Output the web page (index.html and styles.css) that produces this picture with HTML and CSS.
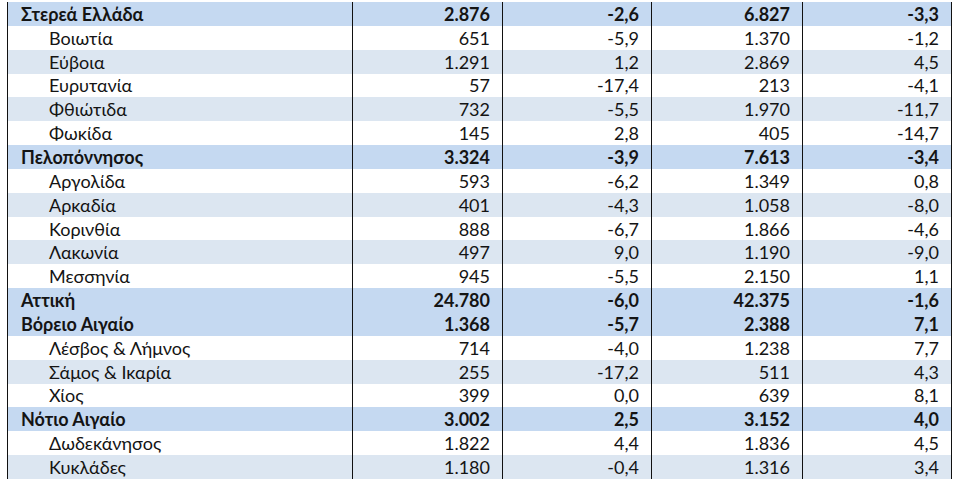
FILE: index.html
```html
<!DOCTYPE html>
<html lang="el">
<head>
<meta charset="utf-8">
<link rel="stylesheet" href="styles.css">
</head>
<body>
<table class="stats">
<colgroup><col class="c-name"><col class="c-num"><col class="c-num2"><col class="c-num3"><col class="c-num4"></colgroup>
<tbody>
<tr class="region"><td class="name">Στερεά Ελλάδα</td><td>2.876</td><td>-2,6</td><td>6.827</td><td>-3,3</td></tr>
<tr class="plain"><td class="name sub">Βοιωτία</td><td>651</td><td>-5,9</td><td>1.370</td><td>-1,2</td></tr>
<tr class="alt"><td class="name sub">Εύβοια</td><td>1.291</td><td>1,2</td><td>2.869</td><td>4,5</td></tr>
<tr class="plain"><td class="name sub">Ευρυτανία</td><td>57</td><td>-17,4</td><td>213</td><td>-4,1</td></tr>
<tr class="alt"><td class="name sub">Φθιώτιδα</td><td>732</td><td>-5,5</td><td>1.970</td><td>-11,7</td></tr>
<tr class="plain"><td class="name sub">Φωκίδα</td><td>145</td><td>2,8</td><td>405</td><td>-14,7</td></tr>
<tr class="region"><td class="name">Πελοπόννησος</td><td>3.324</td><td>-3,9</td><td>7.613</td><td>-3,4</td></tr>
<tr class="plain"><td class="name sub">Αργολίδα</td><td>593</td><td>-6,2</td><td>1.349</td><td>0,8</td></tr>
<tr class="alt"><td class="name sub">Αρκαδία</td><td>401</td><td>-4,3</td><td>1.058</td><td>-8,0</td></tr>
<tr class="plain"><td class="name sub">Κορινθία</td><td>888</td><td>-6,7</td><td>1.866</td><td>-4,6</td></tr>
<tr class="alt"><td class="name sub">Λακωνία</td><td>497</td><td>9,0</td><td>1.190</td><td>-9,0</td></tr>
<tr class="plain"><td class="name sub">Μεσσηνία</td><td>945</td><td>-5,5</td><td>2.150</td><td>1,1</td></tr>
<tr class="region"><td class="name">Αττική</td><td>24.780</td><td>-6,0</td><td>42.375</td><td>-1,6</td></tr>
<tr class="region"><td class="name">Βόρειο Αιγαίο</td><td>1.368</td><td>-5,7</td><td>2.388</td><td>7,1</td></tr>
<tr class="plain"><td class="name sub">Λέσβος &amp; Λήμνος</td><td>714</td><td>-4,0</td><td>1.238</td><td>7,7</td></tr>
<tr class="alt"><td class="name sub">Σάμος &amp; Ικαρία</td><td>255</td><td>-17,2</td><td>511</td><td>4,3</td></tr>
<tr class="plain"><td class="name sub">Χίος</td><td>399</td><td>0,0</td><td>639</td><td>8,1</td></tr>
<tr class="region"><td class="name">Νότιο Αιγαίο</td><td>3.002</td><td>2,5</td><td>3.152</td><td>4,0</td></tr>
<tr class="plain"><td class="name sub">Δωδεκάνησος</td><td>1.822</td><td>4,4</td><td>1.836</td><td>4,5</td></tr>
<tr class="alt"><td class="name sub">Κυκλάδες</td><td>1.180</td><td>-0,4</td><td>1.316</td><td>3,4</td></tr>
</tbody>
</table>
</body>
</html>
```
FILE: styles.css
```css
html, body {
  margin: 0;
  padding: 0;
  background: #ffffff;
}
body {
  padding: 2px 0 0 7px;
  font-family: Lato, "Noto Sans", sans-serif;
  font-size: 18px;
  color: #141414;
}
.stats {
  border-collapse: collapse;
  table-layout: fixed;
  width: 945px;
}
.c-name { width: 345px; }
.c-num { width: 150px; }
.c-num2 { width: 149px; }
.c-num3 { width: 151px; }
.c-num4 { width: 149px; }
.stats td {
  height: 23.85px;
  padding: 0 12px 0 0;
  box-sizing: border-box;
  text-align: right;
  border-left: 1px solid #111;
  border-right: 1px solid #111;
  line-height: 1;
  white-space: nowrap;
}
.stats td.name {
  text-align: left;
  padding: 0 0 0 13px;
}
.stats td.sub {
  padding-left: 41px;
}
.region td {
  background: #c5d9f1;
  font-weight: 700;
}
.alt td {
  background: #dce6f1;
}
.plain td {
  background: #ffffff;
}
```
